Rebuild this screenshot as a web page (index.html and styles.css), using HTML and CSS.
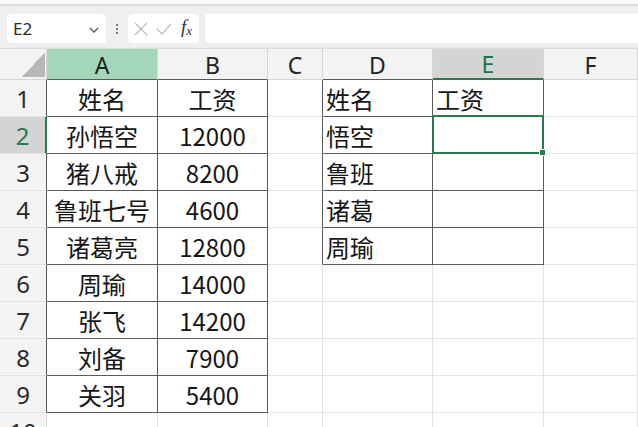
FILE: index.html
```html
<!DOCTYPE html>
<html lang="zh-CN">
<head>
<meta charset="utf-8">
<title>Sheet</title>
<link rel="stylesheet" href="styles.css">
</head>
<body>
<div class="app">
  <div class="topstrip"></div>
  <div class="toolbar">
    <div class="namebox">
      <span class="ref">E2</span>
      <svg class="chev" width="10" height="6" viewBox="0 0 10 6"><path d="M1 1 L5 5 L9 1" fill="none" stroke="#555" stroke-width="1.3"/></svg>
    </div>
    <div class="dots"><span></span><span></span><span></span></div>
    <div class="fxbox">
      <svg width="14" height="14" viewBox="0 0 14 14"><path d="M1 1 L13 13 M13 1 L1 13" stroke="#bdbdbd" stroke-width="1.3" fill="none"/></svg>
      <svg width="16" height="12" viewBox="0 0 16 12"><path d="M1 6 L6 11 L15 1" stroke="#bdbdbd" stroke-width="1.3" fill="none"/></svg>
      <span class="fx">f<sub>x</sub></span>
    </div>
    <div class="formula"></div>
  </div>
  <div class="grid">
    <div class="hd corner"><span class="tri"></span></div>
    <div class="hd hdA dkb">A</div>
    <div class="hd dkb">B</div>
    <div class="hd">C</div>
    <div class="hd dkb">D</div>
    <div class="hd hdsel">E</div>
    <div class="hd">F</div>

    <div class="rh dkr">1</div>
    <div class="c dk ctr">姓名</div>
    <div class="c dk ctr">工资</div>
    <div class="c dkr"></div>
    <div class="c dk lft">姓名</div>
    <div class="c dk lft">工资</div>
    <div class="c"></div>

    <div class="rh rhsel">2</div>
    <div class="c dk ctr">孙悟空</div>
    <div class="c dk ctr">12000</div>
    <div class="c dkr"></div>
    <div class="c dk lft">悟空</div>
    <div class="c dk sel"></div>
    <div class="c"></div>

    <div class="rh dkr">3</div>
    <div class="c dk ctr">猪八戒</div>
    <div class="c dk ctr">8200</div>
    <div class="c dkr"></div>
    <div class="c dk lft">鲁班</div>
    <div class="c dk"></div>
    <div class="c"></div>

    <div class="rh dkr">4</div>
    <div class="c dk ctr">鲁班七号</div>
    <div class="c dk ctr">4600</div>
    <div class="c dkr"></div>
    <div class="c dk lft">诸葛</div>
    <div class="c dk"></div>
    <div class="c"></div>

    <div class="rh dkr">5</div>
    <div class="c dk ctr">诸葛亮</div>
    <div class="c dk ctr">12800</div>
    <div class="c dkr"></div>
    <div class="c dk lft">周瑜</div>
    <div class="c dk"></div>
    <div class="c"></div>

    <div class="rh dkr">6</div>
    <div class="c dk ctr">周瑜</div>
    <div class="c dk ctr">14000</div>
    <div class="c"></div>
    <div class="c"></div>
    <div class="c"></div>
    <div class="c"></div>

    <div class="rh dkr">7</div>
    <div class="c dk ctr">张飞</div>
    <div class="c dk ctr">14200</div>
    <div class="c"></div>
    <div class="c"></div>
    <div class="c"></div>
    <div class="c"></div>

    <div class="rh dkr">8</div>
    <div class="c dk ctr">刘备</div>
    <div class="c dk ctr">7900</div>
    <div class="c"></div>
    <div class="c"></div>
    <div class="c"></div>
    <div class="c"></div>

    <div class="rh dkr">9</div>
    <div class="c dk ctr">关羽</div>
    <div class="c dk ctr">5400</div>
    <div class="c"></div>
    <div class="c"></div>
    <div class="c"></div>
    <div class="c"></div>

    <div class="rh">10</div>
    <div class="c"></div>
    <div class="c"></div>
    <div class="c"></div>
    <div class="c"></div>
    <div class="c"></div>
    <div class="c"></div>
  </div>
</div>
</body>
</html>
```
FILE: styles.css
```css
* { box-sizing: border-box; }
html, body { margin: 0; padding: 0; }
body {
  width: 638px;
  height: 427px;
  overflow: hidden;
  background: #ffffff;
  font-family: "Noto Sans CJK SC", "Noto Sans", sans-serif;
  color: #1c1c1c;
}
.app { width: 638px; height: 427px; overflow: hidden; }

.topstrip {
  height: 6px;
  background: #f8f8f8;
  border-bottom: 2px solid #dcdcdc;
}
.toolbar {
  height: 43px;
  background: #efefef;
  display: flex;
  align-items: flex-start;
  padding-top: 8px;
  border-bottom: 1px solid #dddddd;
}
.namebox {
  margin-left: 7px;
  width: 99px;
  height: 29px;
  background: #ffffff;
  border-radius: 4px;
  display: flex;
  align-items: center;
  justify-content: space-between;
  padding: 0 7px 0 6px;
}
.ref {
  font-family: "Noto Sans", "Liberation Sans", sans-serif;
  font-size: 17px;
  color: #2a2a2a;
}
.chev { margin-top: 2px; }
.dots {
  width: 22px;
  height: 29px;
  display: flex;
  flex-direction: column;
  align-items: center;
  justify-content: center;
  gap: 2px;
}
.dots span {
  width: 2px;
  height: 2px;
  background: #555;
  border-radius: 1px;
}
.fxbox {
  width: 71px;
  height: 29px;
  background: #ffffff;
  border-radius: 4px;
  display: flex;
  align-items: center;
  padding-left: 6px;
  gap: 8px;
}
.fx {
  font-family: "Liberation Serif", "DejaVu Serif", serif;
  font-style: italic;
  font-size: 19px;
  color: #333;
  margin-left: 1px;
  margin-top: -2px;
}
.fx sub { font-size: 13px; vertical-align: -2px; }
.formula {
  flex: 1;
  height: 29px;
  margin-left: 6px;
  background: #ffffff;
  border-radius: 4px 0 0 4px;
}

.grid {
  display: grid;
  grid-template-columns: 47px 111px 110px 55px 110px 111px 1fr;
  grid-template-rows: 31px repeat(9, 37px) 37px;
}
.hd {
  background: #f3f3f3;
  border-right: 1px solid #d6d6d6;
  border-bottom: 1px solid #d6d6d6;
  display: flex;
  align-items: center;
  justify-content: center;
  font-family: "Noto Sans", "Liberation Sans", sans-serif;
  font-size: 23px;
  color: #222;
  padding-top: 1px;
}
.corner {
  align-items: flex-end;
  justify-content: flex-end;
  padding: 0 1px 2px 0;
}
.tri {
  width: 23px;
  height: 25px;
  background: linear-gradient(to top left, #b8b8b8 50%, transparent 50%);
}
.hdA { background: #a4d7ba; }
.hdsel {
  background: #d4d4d4;
  color: #1f7244;
  border-bottom: 2px solid #2a7a4e;
}
.dkb { border-bottom-color: #5a5a5a; }

.rh {
  background: #f3f3f3;
  border-right: 1px solid #d6d6d6;
  border-bottom: 1px solid #e0e0e0;
  display: flex;
  align-items: center;
  justify-content: center;
  font-family: "Noto Sans", "Liberation Sans", sans-serif;
  font-size: 24px;
  color: #2a2a2a;
}
.rhsel {
  background: #d4d4d4;
  color: #2a7a4e;
  border-right: 2px solid #2a7a4e;
}

.c {
  border-right: 1px solid #e2e2e2;
  border-bottom: 1px solid #e2e2e2;
  display: flex;
  align-items: center;
  font-size: 24px;
  white-space: nowrap;
  color: #161616;
}
.ctr { justify-content: center; }
.lft { padding-left: 3px; }
.dk {
  border-right-color: #5a5a5a;
  border-bottom-color: #5a5a5a;
}
.dkr { border-right-color: #5a5a5a; }

.sel { position: relative; }
.sel::after {
  content: "";
  position: absolute;
  top: -2px;
  left: -1px;
  right: -1px;
  bottom: -1px;
  border: 2px solid #2a7a4e;
}
.sel::before {
  content: "";
  position: absolute;
  right: -3px;
  bottom: -3px;
  width: 5px;
  height: 5px;
  background: #2a7a4e;
  border: 1px solid #ffffff;
  z-index: 2;
}
```
